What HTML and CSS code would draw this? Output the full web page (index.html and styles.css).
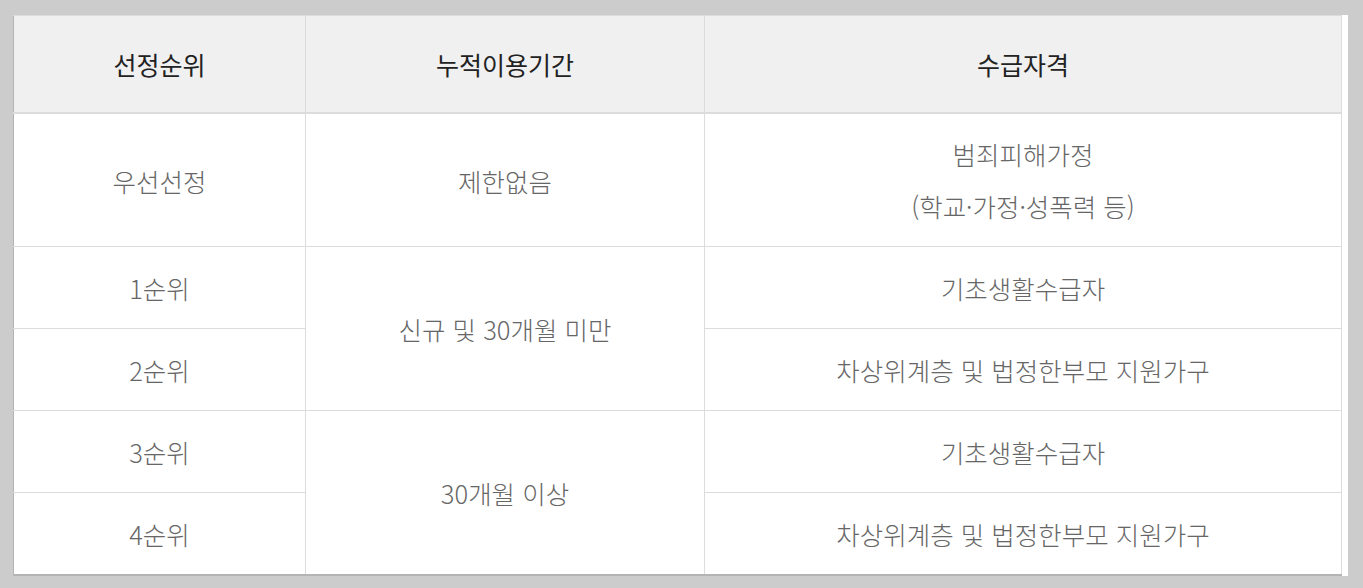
FILE: index.html
```html
<!DOCTYPE html>
<html lang="ko">
<head>
<meta charset="utf-8">
<link rel="stylesheet" href="styles.css">
</head>
<body>
<div class="frame">
  <div class="sheet">
    <table class="grid">
      <colgroup>
        <col class="c1">
        <col class="c2">
        <col class="c3">
      </colgroup>
      <thead>
        <tr>
          <th>선정순위</th>
          <th>누적이용기간</th>
          <th>수급자격</th>
        </tr>
      </thead>
      <tbody>
        <tr class="tall">
          <td>우선선정</td>
          <td>제한없음</td>
          <td><p class="ln">범죄피해가정</p><p class="ln">(학교·가정·성폭력 등)</p></td>
        </tr>
        <tr>
          <td>1순위</td>
          <td rowspan="2">신규 및 30개월 미만</td>
          <td>기초생활수급자</td>
        </tr>
        <tr>
          <td>2순위</td>
          <td>차상위계층 및 법정한부모 지원가구</td>
        </tr>
        <tr>
          <td>3순위</td>
          <td rowspan="2">30개월 이상</td>
          <td>기초생활수급자</td>
        </tr>
        <tr>
          <td>4순위</td>
          <td>차상위계층 및 법정한부모 지원가구</td>
        </tr>
      </tbody>
    </table>
  </div>
</div>
</body>
</html>
```
FILE: styles.css
```css
html, body {
  margin: 0;
  padding: 0;
  background: #cccccc;
}
body {
  font-family: "Noto Sans CJK KR", "Noto Sans", sans-serif;
  height: 588px;
  overflow: hidden;
}
.frame {
  padding: 15px 0 0 13px;
}
.sheet {
  width: 1335px;
  background: #ffffff;
}
.grid {
  width: 1328px;
  table-layout: fixed;
  border-collapse: collapse;
  border-left: 1px solid #b4b4b4;
  border-bottom: 2px solid #b4b4b4;
}
.c1 { width: 292px; }
.c2 { width: 399px; }
.c3 { width: 637px; }
th, td {
  border: 1px solid #dcdcdc;
  text-align: center;
  vertical-align: middle;
  padding: 0;
}
th:first-child, td:first-child {
  border-left: 1px solid #b4b4b4;
}
th {
  background: #f0f0f0;
  color: #222222;
  font-size: 25px;
  font-weight: 400;
  height: 96px;
  border-top: 1px solid #dcdcdc;
  border-bottom: 2px solid #dcdcdc;
}
td {
  color: #666666;
  font-size: 25.5px;
  font-weight: 300;
  height: 81px;
}
tr.tall td {
  height: 132px;
}
.ln {
  margin: 0;
  line-height: 52px;
}
```
